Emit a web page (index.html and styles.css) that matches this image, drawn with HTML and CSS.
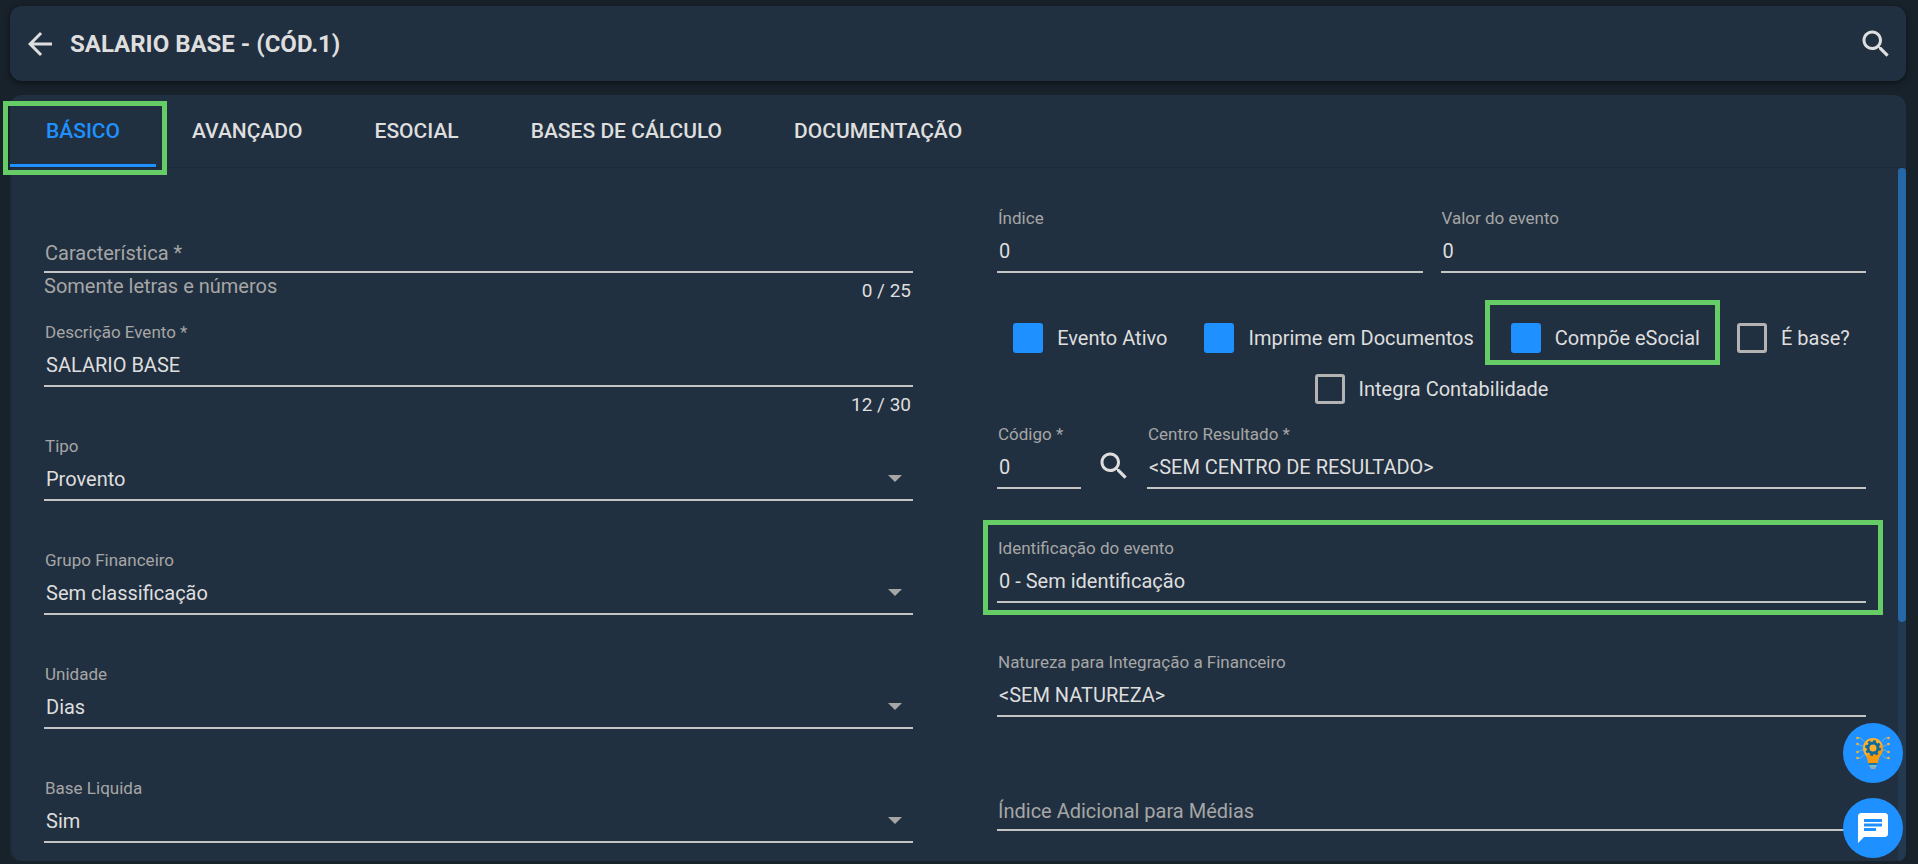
FILE: index.html
```html
<!DOCTYPE html>
<html lang="pt-BR">
<head>
    <meta charset="UTF-8">
    <meta name="viewport" content="width=device-width, initial-scale=1.0">
    <title>Evento - Salario Base</title>
    <link rel="stylesheet" href="styles.css">
</head>
<body>
    <header class="header">
        <button type="button" class="icon-button" aria-label="Voltar">
            <svg class="icon" viewBox="0 0 24 24"><path d="M20 11H7.83l5.59-5.59L12 4l-8 8 8 8 1.41-1.41L7.83 13H20v-2z"/></svg>
        </button>
        <h1>SALARIO BASE - (CÓD.1)</h1>
        <button type="button" class="icon-button" aria-label="Pesquisar">
            <svg class="icon" viewBox="0 0 24 24"><path d="M15.5 14h-.79l-.28-.27C15.41 12.59 16 11.11 16 9.5 16 5.91 13.09 3 9.5 3S3 5.91 3 9.5 5.91 16 9.5 16c1.61 0 3.09-.59 4.23-1.57l.27.28v.79l5 4.99L20.49 19l-4.99-5zm-6 0C7.01 14 5 11.99 5 9.5S7.01 5 9.5 5 14 7.01 14 9.5 11.99 14 9.5 14z"/></svg>
        </button>
    </header>

    <main class="panel">
        <nav class="tabs">
            <a href="#basico" class="tab active highlight">BÁSICO</a>
            <a href="#avancado" class="tab">AVANÇADO</a>
            <a href="#esocial" class="tab">ESOCIAL</a>
            <a href="#bases" class="tab">BASES DE CÁLCULO</a>
            <a href="#documentacao" class="tab">DOCUMENTAÇÃO</a>
        </nav>

        <div class="panel-body">
            <form class="form" id="basico">
                <div class="column">
                    <div class="field empty">
                        <label for="caracteristica">Característica *</label>
                        <input type="text" id="caracteristica" maxlength="25">
                        <div class="field-footer">
                            <span class="hint">Somente letras e números</span>
                            <span class="counter">0 / 25</span>
                        </div>
                    </div>
                    <div class="field">
                        <label for="descricao">Descrição Evento *</label>
                        <input type="text" id="descricao" maxlength="30" value="SALARIO BASE">
                        <div class="field-footer">
                            <span class="counter">12 / 30</span>
                        </div>
                    </div>
                    <div class="field">
                        <label for="tipo">Tipo</label>
                        <div class="select">
                            <select id="tipo"><option>Provento</option></select>
                        </div>
                    </div>
                    <div class="field">
                        <label for="grupo">Grupo Financeiro</label>
                        <div class="select">
                            <select id="grupo"><option>Sem classificação</option></select>
                        </div>
                    </div>
                    <div class="field">
                        <label for="unidade">Unidade</label>
                        <div class="select">
                            <select id="unidade"><option>Dias</option></select>
                        </div>
                    </div>
                    <div class="field">
                        <label for="base-liquida">Base Liquida</label>
                        <div class="select">
                            <select id="base-liquida"><option>Sim</option></select>
                        </div>
                    </div>
                </div>

                <div class="column">
                    <div class="row">
                        <div class="field">
                            <label for="indice">Índice</label>
                            <input type="text" id="indice" value="0">
                        </div>
                        <div class="field">
                            <label for="valor">Valor do evento</label>
                            <input type="text" id="valor" value="0">
                        </div>
                    </div>

                    <div class="checks">
                        <label class="check"><input type="checkbox" checked>Evento Ativo</label>
                        <label class="check"><input type="checkbox" checked>Imprime em Documentos</label>
                        <label class="check highlight"><input type="checkbox" checked>Compõe eSocial</label>
                        <label class="check"><input type="checkbox">É base?</label>
                        <label class="check"><input type="checkbox">Integra Contabilidade</label>
                    </div>

                    <div class="row-search">
                        <div class="field">
                            <label for="codigo">Código *</label>
                            <input type="text" id="codigo" value="0">
                        </div>
                        <button type="button" class="icon-button" aria-label="Buscar centro de resultado">
                            <svg class="icon" viewBox="0 0 24 24"><path d="M15.5 14h-.79l-.28-.27C15.41 12.59 16 11.11 16 9.5 16 5.91 13.09 3 9.5 3S3 5.91 3 9.5 5.91 16 9.5 16c1.61 0 3.09-.59 4.23-1.57l.27.28v.79l5 4.99L20.49 19l-4.99-5zm-6 0C7.01 14 5 11.99 5 9.5S7.01 5 9.5 5 14 7.01 14 9.5 11.99 14 9.5 14z"/></svg>
                        </button>
                        <div class="field">
                            <label for="centro">Centro Resultado *</label>
                            <input type="text" id="centro" value="&lt;SEM CENTRO DE RESULTADO&gt;">
                        </div>
                    </div>

                    <div class="field highlight">
                        <label for="identificacao">Identificação do evento</label>
                        <input type="text" id="identificacao" value="0 - Sem identificação">
                    </div>
                    <div class="field">
                        <label for="natureza">Natureza para Integração a Financeiro</label>
                        <input type="text" id="natureza" value="&lt;SEM NATUREZA&gt;">
                    </div>
                    <div class="field empty">
                        <label for="medias">Índice Adicional para Médias</label>
                        <input type="text" id="medias">
                    </div>
                </div>
            </form>
            <div class="scrollbar"><div class="scrollbar-thumb"></div></div>
        </div>
    </main>

    <div class="floating">
        <button type="button" class="fab" aria-label="Dicas">
            <svg class="bulb" viewBox="0 0 36 36">
                <g fill="none" stroke="#5fb8d6" stroke-width="1">
                    <path d="M3 3h3l3 3.500M33 3h-3l-3 3.500M3 9l3 2h2M33 9l-3 2h-2M3 17l3-2h2M33 17l-3-2h-2M3 23h3l3-3.500M33 23h-3l-3-3.500"/>
                </g>
                <path fill="#ffb02e" d="M18 3C12 3 8 7.500 8 13c0 3.500 1.500 6 3 8 1.500 2 2 4 2 7h10c0-3 .5-5 2-7 1.500-2 3-4.500 3-8 0-5.500-4-10-10-10z"/>
                <path fill="#f59a0c" d="M13 28c0-3-.5-5-2-7l3-2h8l5-10c2 4 1 8-2 12-1.500 2-2 4-2 7z"/>
                <circle cx="18" cy="13" r="5" fill="none" stroke="#0f6a9c" stroke-width="3"/>
                <circle cx="18" cy="13" r="7" fill="none" stroke="#0f6a9c" stroke-width="2" stroke-dasharray="2.750 2.750"/>
                <path fill="#1f76a3" d="M14 28h8v2h-8z"/>
                <path fill="#6cc3d8" d="M14 30h8l-1 2h-6z"/>
                <path fill="#a7a1ac" d="M15 32h6l-1 2h-4z"/>
                <g fill="#ffb02e">
                    <circle cx="2.500" cy="3" r="1.300"/><circle cx="33.500" cy="3" r="1.300"/>
                    <circle cx="2.500" cy="9" r="1.300"/><circle cx="33.500" cy="9" r="1.300"/>
                    <circle cx="2.500" cy="17" r="1.300"/><circle cx="33.500" cy="17" r="1.300"/>
                    <circle cx="2.500" cy="23" r="1.300"/><circle cx="33.500" cy="23" r="1.300"/>
                </g>
            </svg>
        </button>
        <button type="button" class="fab" aria-label="Chat">
            <svg class="icon" viewBox="0 0 24 24"><path d="M20 2H4c-1.100 0-1.990.9-1.990 2L2 22l4-4h14c1.100 0 2-.9 2-2V4c0-1.100-.9-2-2-2zM6 9h12v2H6V9zm8 5H6v-2h8v2zm4-6H6V6h12v2z"/></svg>
        </button>
    </div>
</body>
</html>
```

FILE: styles.css
```css
* {
    margin: 0;
    padding: 0;
    box-sizing: border-box;
    font-family: Roboto, 'Liberation Sans', sans-serif;
}

body {
    display: flex;
    flex-direction: column;
    gap: 14px;
    height: 100vh;
    padding: 6px 12px 3px 10px;
    overflow: hidden;
    background-color: #18222b;
    color: #dedede;
}

button {
    background: none;
    border: none;
    cursor: pointer;
}

/* Header */
.header {
    display: flex;
    align-items: center;
    gap: 12px;
    padding: 20px 12px 19px;
    background-color: #213040;
    border-radius: 12px;
    box-shadow: 0 2px 6px rgba(0, 0, 0, 0.5);
}

.header h1 {
    flex: 1;
    font-size: 24px;
    line-height: 36px;
    font-weight: bold;
}

.icon-button {
    display: flex;
    color: #dedede;
}

.icon {
    width: 36px;
    height: 36px;
    fill: currentColor;
}

/* Panel and tabs */
.panel {
    display: flex;
    flex-direction: column;
    flex: 1;
    min-height: 0;
    background-color: #213040;
    border-radius: 12px;
}

.tabs {
    display: flex;
    border-bottom: 1px solid #1d2a37;
}

.tab {
    padding: 3px 36px 0;
    border-bottom: 3px solid transparent;
    color: #dedede;
    font-size: 21px;
    line-height: 66px;
    font-weight: 500;
    text-decoration: none;
}

.tab.active {
    color: #1e90ff;
    border-bottom-color: #1e90ff;
}

.panel-body {
    display: flex;
    flex: 1;
    min-height: 0;
}

/* Form */
.form {
    flex: 1;
    display: grid;
    grid-template-columns: 1fr 1fr;
    align-items: start;
    gap: 84px;
    padding: 40px 32px 0;
    overflow: hidden;
    border-left: 2px solid #1e2c3a;
    border-bottom-left-radius: 12px;
}

.field {
    display: grid;
    grid-template-rows: 20px 45px 49px;
    min-width: 0;
}

.field label {
    padding-left: 1px;
    color: #a6a6a6;
    font-size: 17px;
    line-height: 20px;
}

.field input,
.field select {
    width: 100%;
    height: 45px;
    padding: 3px 2px 0;
    background: transparent;
    border: none;
    border-bottom: 2px solid #c4c4c4;
    border-radius: 0;
    outline: none;
    color: #dedede;
    font-size: 20px;
    appearance: none;
}

.field.empty label {
    grid-area: 2 / 1;
    padding-top: 4px;
    font-size: 20px;
    line-height: 42px;
}

.field.empty input {
    grid-area: 2 / 1;
}

.select {
    display: grid;
    align-items: center;
}

.select select {
    grid-area: 1 / 1;
}

.select::after {
    content: "";
    grid-area: 1 / 1;
    justify-self: end;
    margin-right: 11px;
    border: 7px solid transparent;
    border-top-color: #a6a6a6;
    border-bottom: none;
    pointer-events: none;
}

.field-footer {
    display: flex;
    justify-content: space-between;
}

.field.empty .field-footer {
    grid-row: 3;
}

.hint {
    color: #a6a6a6;
    font-size: 20px;
    line-height: 26px;
}

.counter {
    margin-left: auto;
    padding: 6px 2px 0 0;
    font-size: 19px;
    line-height: 24px;
}

.row {
    display: grid;
    grid-template-columns: 1fr 1fr;
    gap: 18px;
}

.row-search {
    display: grid;
    grid-template-columns: 84px 66px 1fr;
}

.row-search .icon-button {
    align-self: start;
    justify-content: center;
    padding-top: 24px;
}

/* Checkboxes */
.checks {
    display: flex;
    flex-wrap: wrap;
    justify-content: center;
    column-gap: 37px;
}

.check {
    display: flex;
    align-items: center;
    gap: 14px;
    height: 32px;
    margin-bottom: 19px;
    font-size: 20px;
}

.check input {
    width: 30px;
    height: 30px;
    border: 3px solid #b3b3b3;
    border-radius: 3px;
    appearance: none;
}

.check input:checked {
    background-color: #1e90ff;
    border-color: #1e90ff;
}

/* Highlight frames */
.highlight {
    position: relative;
}

.highlight::after {
    content: "";
    position: absolute;
    border: 5px solid #66cc66;
    pointer-events: none;
}

.tab.highlight::after {
    inset: 6px -11px -11px -7px;
}

.check.highlight::after {
    inset: -22px -20px -11px -26px;
}

.field.highlight::after {
    inset: -18px -17px 37px -14px;
}

/* Scrollbar */
.scrollbar {
    width: 8px;
    background-color: #22394f;
    border-bottom-right-radius: 8px;
}

.scrollbar-thumb {
    height: 65.5%;
    background-color: #2667a8;
    border-radius: 4px;
}

/* Floating buttons */
.floating {
    position: fixed;
    right: 15px;
    bottom: 6px;
    display: flex;
    flex-direction: column;
    gap: 15px;
}

.fab {
    display: flex;
    align-items: center;
    justify-content: center;
    width: 60px;
    height: 60px;
    background-color: #1e90ff;
    border-radius: 50%;
    color: white;
}

.bulb {
    width: 36px;
    height: 36px;
}
```
